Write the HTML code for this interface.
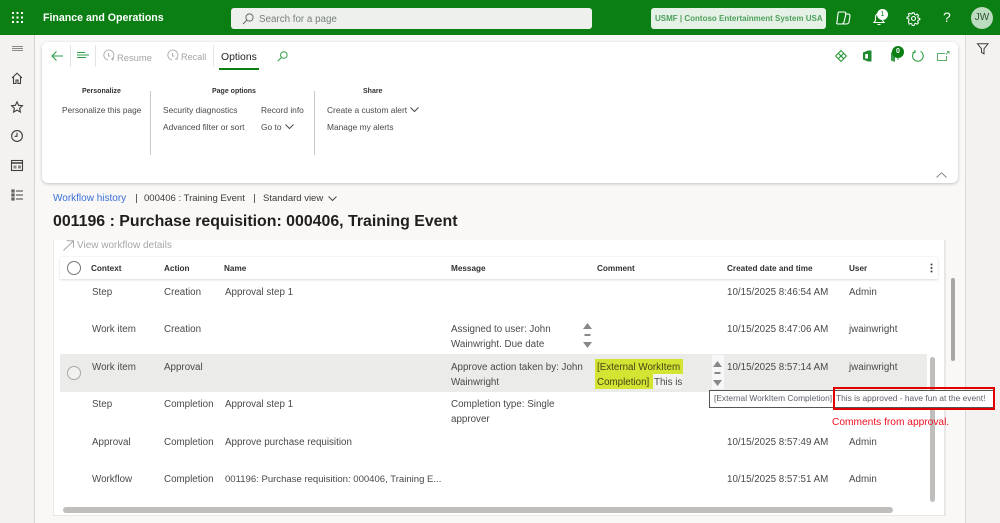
<!DOCTYPE html>
<html><head><meta charset="utf-8">
<style>
html,body{margin:0;padding:0;width:1000px;height:523px;overflow:hidden;background:#f9f8f7;}
body{font-family:"Liberation Sans",sans-serif;color:#3b3a39;position:relative;}
#r{position:absolute;left:0;top:0;width:1000px;height:523px;filter:blur(.25px);}
.a{position:absolute;}
.t{position:absolute;white-space:nowrap;font-size:10px;line-height:15px;}
.h{font-weight:bold;font-size:8.2px;color:#323130;}
.k{font-weight:bold;font-size:7px;color:#323130;}
.g{font-size:9.8px;color:#4a4948;}
.p{font-size:8.4px;color:#4a4948;}
svg{position:absolute;overflow:visible;fill:none;}
</style></head>
<body><div id="r">
<!-- top bar -->
<div class="a" style="left:0;top:0;width:1000px;height:35px;background:#0b7f14;"></div>
<svg style="left:12px;top:12px" width="12" height="12"><g fill="#fff"><rect x="0" y="0" width="2" height="2"/><rect x="4.5" y="0" width="2" height="2"/><rect x="9" y="0" width="2" height="2"/><rect x="0" y="4.5" width="2" height="2"/><rect x="4.5" y="4.5" width="2" height="2"/><rect x="9" y="4.5" width="2" height="2"/><rect x="0" y="9" width="2" height="2"/><rect x="4.5" y="9" width="2" height="2"/><rect x="9" y="9" width="2" height="2"/></g></svg>
<div class="t" style="left:43px;top:11px;color:#fff;font-weight:bold;font-size:10.6px;">Finance and Operations</div>
<div class="a" style="left:231px;top:8px;width:361px;height:21px;background:#eef0ee;border-radius:3px;"></div>
<svg style="left:242px;top:13px" width="12" height="12" stroke="#666" stroke-width="1"><circle cx="7.5" cy="4.5" r="3.6"/><path d="M5 7L1 11"/></svg>
<div class="t" style="left:259px;top:12px;color:#77807a;font-size:9.8px;">Search for a page</div>
<div class="a" style="left:651px;top:8px;width:175px;height:21px;background:#e5f1e6;border-radius:3px;"></div>
<div class="t" style="left:655px;top:11px;color:#4da05a;font-size:8px;font-weight:bold;">USMF | Contoso Entertainment System USA</div>
<svg style="left:836px;top:11px" width="16" height="15" stroke="#fff" stroke-width="1.1"><path d="M3 1h5q2 0 2 2l-2 8q-.5 2-3 2H2q-2 0-1-2l1-8q0-2 1-2z"/><path d="M9 3h3q2 0 2 2l-1 6q-.5 2-3 2H6"/></svg>
<svg style="left:873px;top:12px" width="13" height="14" stroke="#fff" stroke-width="1.1"><path d="M1 10.5h10l-1.5-2V5a3.4 3.4 0 0 0-7 0v3.500z"/><path d="M4.500 12.500h3"/></svg>
<div class="a" style="left:877px;top:9px;width:11px;height:11px;border-radius:6px;background:#fff;color:#0b7f14;font-size:7px;line-height:11px;text-align:center;">1</div>
<svg style="left:907px;top:12px" width="13" height="13" stroke="#fff" stroke-width="1.1"><circle cx="6.500" cy="6.500" r="2"/><path d="M5.500.8h2l.4 1.700 1.300.6 1.500-.9 1.400 1.400-.9 1.500.6 1.300 1.700.4v1.400l-1.700.4-.6 1.300.9 1.500-1.400 1.400-1.500-.9-1.300.6-.4 1.700H5.500l-.4-1.700-1.300-.6-1.500.9L1.400 10l.9-1.500-.6-1.300L0 6.800V5.400l1.700-.4.6-1.300-.9-1.500L2.800 1.300l1.500.9 1.300-.6z" transform="scale(.95)"/></svg>
<div class="t" style="left:943px;top:10px;color:#fff;font-size:14px;">?</div>
<div class="a" style="left:971px;top:7px;width:22px;height:22px;border-radius:50%;background:#bcdcc0;color:#33523a;font-size:10px;line-height:22px;text-align:center;">JW</div>

<!-- left nav -->
<div class="a" style="left:0;top:35px;width:34px;height:488px;background:#f3f2f1;border-right:1px solid #d6d4d2;"></div>
<svg style="left:12px;top:46px" width="12" height="6" stroke="#8a8886" stroke-width="1"><path d="M0 .5h11M0 2.500h11M0 4.500h11"/></svg>
<svg style="left:11px;top:72px" width="13" height="13" stroke="#3f3e3d" stroke-width="1.1"><path d="M1 6L6 1.200 11 6M2.500 5v6.500h2.500V8h2v3.500h2.500V5"/></svg>
<svg style="left:11px;top:101px" width="13" height="13" stroke="#3f3e3d" stroke-width="1.1"><path d="M6 .8l1.600 3.500 3.800.4-2.800 2.600.8 3.700L6 9.100 2.600 11l.8-3.700L.6 4.700l3.800-.4z"/></svg>
<svg style="left:11px;top:130px" width="13" height="13" stroke="#3f3e3d" stroke-width="1.1"><circle cx="6" cy="6" r="5.400"/><path d="M6 2.800V6.300H3.500"/></svg>
<svg style="left:11px;top:160px" width="13" height="12" stroke="#3f3e3d" stroke-width="1.100"><rect x=".5" y=".5" width="11" height="10"/><path d="M.5 3h11" stroke-width="1.500"/><path d="M2.500 5.500h3v3h-3zM7 5.500h3v3H7z" fill="#888" stroke="none"/></svg>
<svg style="left:11px;top:189px" width="13" height="12" stroke="#3f3e3d" stroke-width="1.100"><path d="M1 1h2v2H1zM1 5h2v2H1zM1 9h2v2H1z"/><path d="M5 2h7M5 6h7M5 10h7"/></svg>

<!-- right panel -->
<div class="a" style="left:965px;top:35px;width:35px;height:488px;background:#f3f2f1;border-left:1px solid #dcdad8;"></div>
<svg style="left:977px;top:43px" width="12" height="12" stroke="#3f3e3d" stroke-width="1"><path d="M.5.8h10.500L7 5.800v5L4.500 9.500V5.800z"/></svg>

<!-- action pane -->
<div class="a" style="left:42px;top:42px;width:916px;height:141px;background:#fff;border-radius:6px;box-shadow:0 1px 3px rgba(0,0,0,.22);"></div>
<svg style="left:51px;top:50px" width="13" height="12" stroke="#2f9e44" stroke-width="1.100"><path d="M12 6H1M5.500 1.500L1 6l4.500 4.500"/></svg>
<div class="a" style="left:70px;top:45px;width:1px;height:22px;background:#e4e3e2;"></div>
<svg style="left:77px;top:52px" width="12" height="8" stroke="#2f9e44" stroke-width="1.100"><path d="M0 .5h8M0 3h12M0 5.500h9"/></svg>
<div class="a" style="left:95px;top:45px;width:1px;height:22px;background:#e4e3e2;"></div>
<svg style="left:103px;top:50px" width="12" height="12" stroke="#b0afae" stroke-width="1"><path d="M9.500 8.500A5 5 0 1 0 5 10"/><path d="M5.500 3v3h2M8 9h3M9.500 7.500v3"/></svg>
<div class="t" style="left:117px;top:50px;color:#a5a4a3;font-size:9.4px;">Resume</div>
<svg style="left:167px;top:50px" width="12" height="12" stroke="#b0afae" stroke-width="1"><path d="M9.500 8.500A5 5 0 1 0 5 10"/><path d="M5.500 3v3h2M8 9h3"/></svg>
<div class="t" style="left:181px;top:50px;color:#a5a4a3;font-size:9.1px;">Recall</div>
<div class="a" style="left:213px;top:45px;width:1px;height:22px;background:#e4e3e2;"></div>
<div class="t" style="left:221px;top:50px;color:#252423;font-size:10.4px;">Options</div>
<div class="a" style="left:219px;top:68px;width:40px;height:2px;background:#0b7f14;"></div>
<svg style="left:277px;top:51px" width="11" height="11" stroke="#2f9e44" stroke-width="1"><circle cx="6.800" cy="4" r="3.300"/><path d="M4.500 6.500L.8 10"/></svg>

<div class="t k" style="left:82px;top:84px;">Personalize</div>
<div class="t k" style="left:212px;top:84px;">Page options</div>
<div class="t k" style="left:363px;top:84px;">Share</div>
<div class="t p" style="left:62px;top:103px;font-size:8.3px;">Personalize this page</div>
<div class="t p" style="left:163px;top:103px;">Security diagnostics</div>
<div class="t p" style="left:163px;top:120px;">Advanced filter or sort</div>
<div class="t p" style="left:261px;top:103px;">Record info</div>
<div class="t p" style="left:261px;top:120px;">Go to</div>
<svg style="left:285px;top:124px" width="9" height="6" stroke="#4a4948" stroke-width="1"><path d="M.5.500L4.500 4.500 8.500.5"/></svg>
<div class="t p" style="left:327px;top:103px;">Create a custom alert</div>
<svg style="left:410px;top:107px" width="9" height="6" stroke="#4a4948" stroke-width="1"><path d="M.5.500L4.500 4.500 8.500.5"/></svg>
<div class="t p" style="left:327px;top:120px;">Manage my alerts</div>
<div class="a" style="left:150px;top:91px;width:1px;height:64px;background:#c9c8c7;"></div>
<div class="a" style="left:314px;top:91px;width:1px;height:64px;background:#c9c8c7;"></div>
<svg style="left:936px;top:172px" width="11" height="6" stroke="#8a8886" stroke-width="1"><path d="M.5 5.500L5.500.8 10.500 5.500"/></svg>

<svg style="left:835px;top:50px" width="12" height="12" stroke="#2a9a3c" stroke-width="1.100"><path d="M6 .6L11.400 6 6 11.400.6 6z"/><path d="M3.300 3.300l5.400 5.400M8.700 3.300L3.300 8.700"/></svg>
<svg style="left:862px;top:50px" width="11" height="12"><path d="M1 2.500L6 .5h3.500v11H6L1 9.500z" fill="#1f8a32"/><path d="M3.200 4h2.800v4.500H3.200z" fill="#fff"/></svg>
<svg style="left:890px;top:50px" width="10" height="13"><path d="M1 2.500L5 1v11L1 10.500z" fill="#3a9a4a"/><path d="M5 2h3v8" stroke="#3a9a4a"/></svg>
<div class="a" style="left:892px;top:46px;width:12px;height:12px;border-radius:50%;background:#0b7f14;color:#fff;font-size:7px;font-weight:bold;line-height:12px;text-align:center;">0</div>
<svg style="left:912px;top:50px" width="12" height="12" stroke="#2f9e44" stroke-width="1.100"><path d="M3 1.500A5.300 5.300 0 1 0 8.500 1.300"/><path d="M3 0v2.500h-2.500" /></svg>
<svg style="left:937px;top:51px" width="13" height="11" stroke="#5fae6a" stroke-width="1"><path d="M8 2.500H.5v7h9V5"/><path d="M9 3.500L12 .5M10 .5h2v2"/></svg>

<!-- titles -->
<div class="t" style="left:53px;top:191px;color:#3a70d8;font-size:10px;">Workflow history</div>
<div class="a" style="left:136px;top:194px;width:1px;height:9px;background:#605e5c;"></div>
<div class="t" style="left:144px;top:191px;color:#3b3a39;font-size:9.55px;">000406 : Training Event</div>
<div class="a" style="left:254px;top:194px;width:1px;height:9px;background:#605e5c;"></div>
<div class="t" style="left:263px;top:191px;color:#3b3a39;font-size:9.5px;">Standard view</div>
<svg style="left:328px;top:196px" width="9" height="6" stroke="#4a4948" stroke-width="1"><path d="M.5.500L4.500 4.500 8.500.5"/></svg>
<div class="t" style="left:53px;top:212px;color:#201f1e;font-size:15.9px;line-height:20px;font-weight:bold;">001196 : Purchase requisition: 000406, Training Event</div>

<!-- grid -->
<div class="a" style="left:53px;top:240px;width:890px;height:275px;background:#fff;border-left:1px solid #eaeaea;border-right:2px solid #e8e7e6;border-bottom:1px solid #e8e7e6;"></div>
<svg style="left:63px;top:240px" width="12" height="11" stroke="#a8a7a6" stroke-width="1"><path d="M.5 10.500L10.500.8M3.500.8h7v7"/></svg>
<div class="t" style="left:77px;top:238px;color:#a8a7a6;font-size:10px;">View workflow details</div>
<div class="a" style="left:60px;top:257px;width:878px;height:22px;background:#fff;border:0 solid #eee;box-shadow:0 1px 2px rgba(0,0,0,.14),0 -1px 1px rgba(0,0,0,.04);"></div>
<div class="a" style="left:67px;top:261px;width:12px;height:12px;border:1px solid #777;border-radius:50%;"></div>
<div class="t h" style="left:91px;top:261px;">Context</div>
<div class="t h" style="left:164px;top:261px;">Action</div>
<div class="t h" style="left:224px;top:261px;">Name</div>
<div class="t h" style="left:451px;top:261px;">Message</div>
<div class="t h" style="left:597px;top:261px;">Comment</div>
<div class="t h" style="left:727px;top:261px;">Created date and time</div>
<div class="t h" style="left:849px;top:261px;">User</div>
<svg style="left:930px;top:263px" width="3" height="11" fill="#3b3a39"><circle cx="1.500" cy="1.500" r="1" fill="#3b3a39"/><circle cx="1.500" cy="5" r="1" fill="#3b3a39"/><circle cx="1.500" cy="8.500" r="1" fill="#3b3a39"/></svg>

<!-- selected row -->
<div class="a" style="left:60px;top:354px;width:867px;height:38px;background:#ebebea;"></div>
<div class="a" style="left:67px;top:366px;width:12px;height:12px;border:1px solid #a9a8a7;border-radius:50%;background:#f1f1f0;"></div>

<!-- rows -->
<div class="t g" style="left:92px;top:285px;">Step</div><div class="t g" style="left:164px;top:285px;">Creation</div><div class="t g" style="left:225px;top:285px;">Approval step 1</div><div class="t g" style="left:727px;top:285px;">10/15/2025 8:46:54 AM</div><div class="t g" style="left:849px;top:285px;">Admin</div>

<div class="t g" style="left:92px;top:322px;">Work item</div><div class="t g" style="left:164px;top:322px;">Creation</div><div class="t g" style="left:451px;top:322px;">Assigned to user: John</div><div class="t g" style="left:451px;top:337px;">Wainwright. Due date</div><div class="t g" style="left:727px;top:322px;">10/15/2025 8:47:06 AM</div><div class="t g" style="left:849px;top:322px;">jwainwright</div>
<svg style="left:583px;top:323px" width="9" height="25"><path d="M0 6L4.500 0 9 6z" fill="#8a8886"/><path d="M1.500 11h6v2h-6z" fill="#8a8886"/><path d="M0 19h9L4.500 25z" fill="#8a8886"/></svg>

<div class="t g" style="left:92px;top:359.5px;">Work item</div><div class="t g" style="left:164px;top:359.5px;">Approval</div><div class="t g" style="left:451px;top:359.5px;">Approve action taken by: John</div><div class="t g" style="left:451px;top:374.5px;">Wainwright</div><div class="t g" style="left:727px;top:359.5px;">10/15/2025 8:57:14 AM</div><div class="t g" style="left:849px;top:359.5px;">jwainwright</div>
<div class="a" style="left:595px;top:359px;width:88px;height:15px;background:#d4e432;"></div>
<div class="a" style="left:595px;top:374px;width:58px;height:15px;background:#d4e432;"></div>
<div class="t g" style="left:597px;top:359.5px;color:#45451a;">[External WorkItem</div>
<div class="t g" style="left:597px;top:374.5px;color:#45451a;">Completion]</div>
<div class="a" style="left:654px;top:374px;width:28px;height:15px;background:#f2f2f1;"></div>
<div class="t g" style="left:654px;top:374.5px;">This is</div>
<div class="a" style="left:712px;top:355px;width:12px;height:34px;background:#f7f7f7;"></div>
<svg style="left:713px;top:361px" width="9" height="25"><path d="M0 6L4.500 0 9 6z" fill="#8a8886"/><path d="M1.500 11h6v2h-6z" fill="#8a8886"/><path d="M0 19h9L4.500 25z" fill="#8a8886"/></svg>

<div class="t g" style="left:92px;top:397px;">Step</div><div class="t g" style="left:164px;top:397px;">Completion</div><div class="t g" style="left:225px;top:397px;">Approval step 1</div><div class="t g" style="left:451px;top:397px;">Completion type: Single</div><div class="t g" style="left:451px;top:412px;">approver</div><div class="t g" style="left:727px;top:397px;">10/15/2025 8:57:14 AM</div><div class="t g" style="left:849px;top:397px;">Admin</div>

<div class="t g" style="left:92px;top:435px;">Approval</div><div class="t g" style="left:164px;top:435px;">Completion</div><div class="t g" style="left:225px;top:435px;">Approve purchase requisition</div><div class="t g" style="left:727px;top:435px;">10/15/2025 8:57:49 AM</div><div class="t g" style="left:849px;top:435px;">Admin</div>

<div class="t g" style="left:92px;top:472px;">Workflow</div><div class="t g" style="left:164px;top:472px;">Completion</div><div class="t g" style="left:225px;top:472px;font-size:9.55px;">001196: Purchase requisition: 000406, Training E...</div><div class="t g" style="left:727px;top:472px;">10/15/2025 8:57:51 AM</div><div class="t g" style="left:849px;top:472px;">Admin</div>

<!-- scrollbars -->
<div class="a" style="left:63px;top:507px;width:830px;height:6px;border-radius:3px;background:#bfbebd;"></div>
<div class="a" style="left:930px;top:357px;width:5px;height:145px;border-radius:3px;background:#bfbebd;"></div>
<div class="a" style="left:951px;top:278px;width:4px;height:83px;border-radius:2px;background:#a8a7a6;"></div>

<!-- tooltip -->
<div class="a" style="left:709px;top:390px;width:284px;height:16px;background:#fff;border:1px solid #555;"></div>
<div class="t" style="left:714px;top:391px;color:#5b6068;font-size:8.4px;">[External WorkItem Completion]</div>
<div class="t" style="left:836px;top:391px;color:#5b6068;font-size:8.4px;">This is approved - have fun at the event!</div>
<div class="a" style="left:833px;top:387px;width:158px;height:19px;border:2.5px solid #e00000;"></div>
<div class="t" style="left:832px;top:415px;color:#f01020;font-size:10.2px;">Comments from approval.</div>
</div></body></html>
